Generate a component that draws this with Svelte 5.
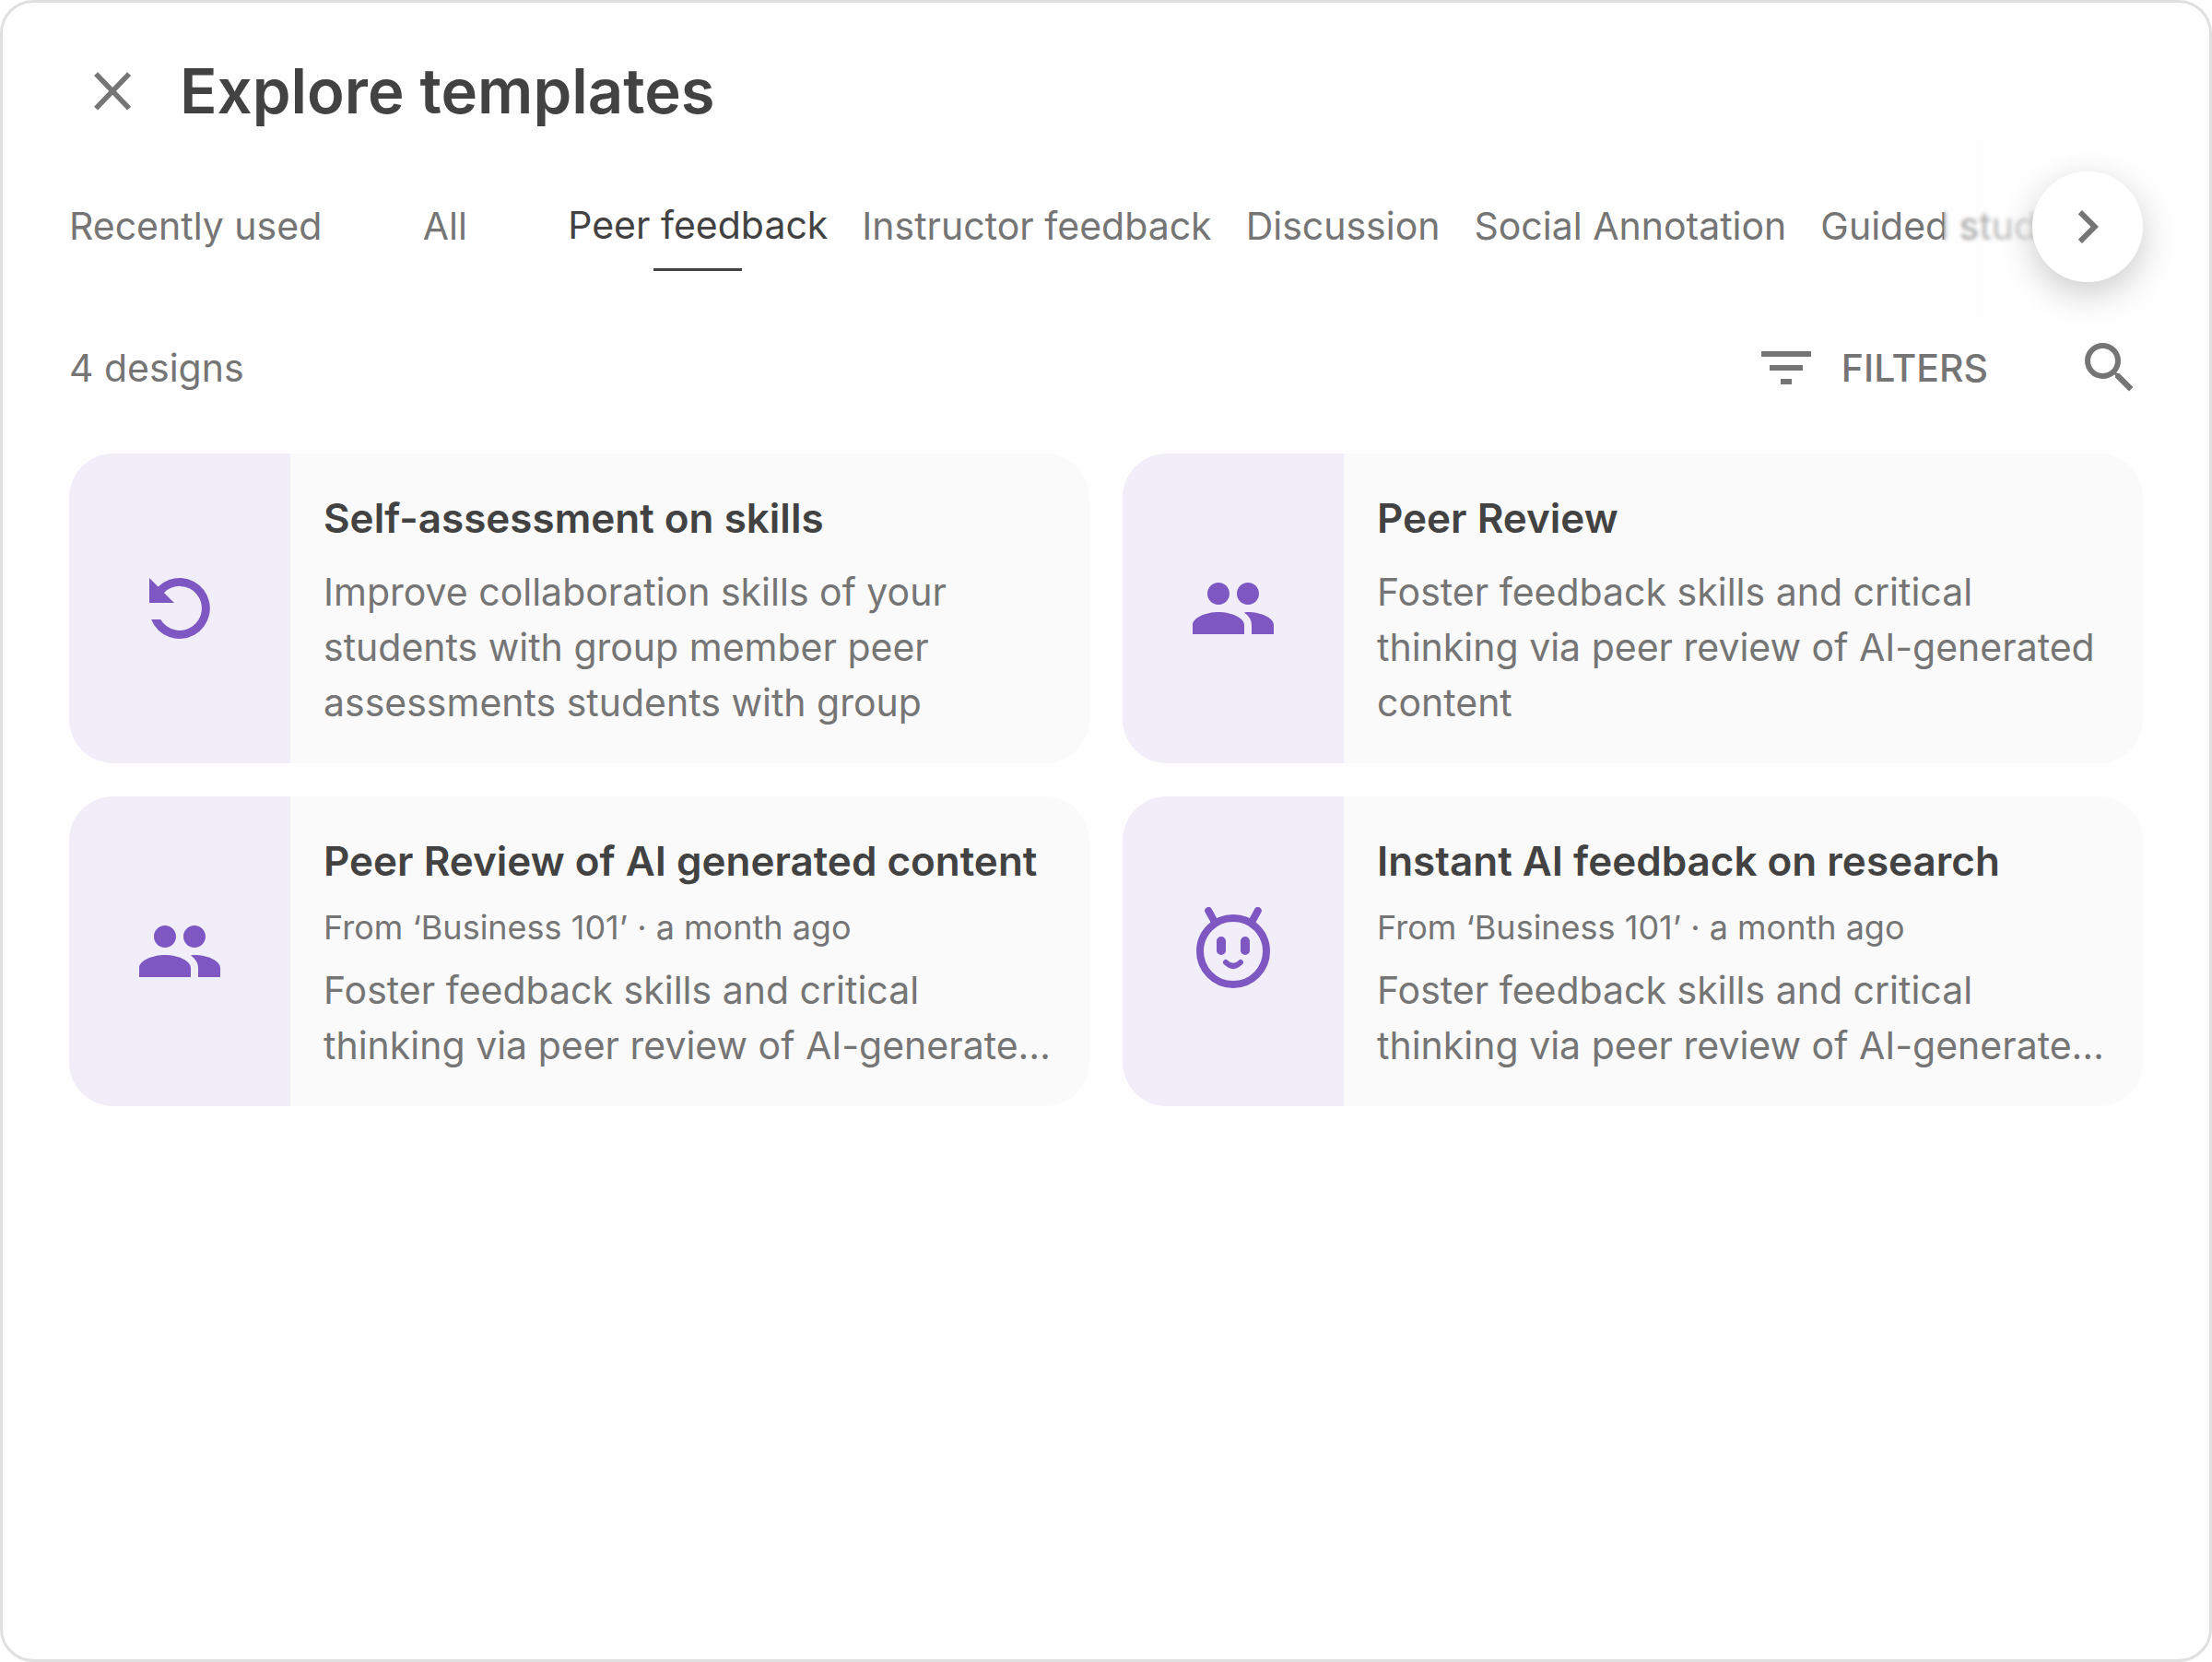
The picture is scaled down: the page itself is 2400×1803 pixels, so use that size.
<script>
  const tabs = ["Recently used", "All", "Peer feedback", "Instructor feedback", "Discussion", "Social Annotation", "Guided study"];
  let activeTab = $state("Peer feedback");

  const designs = [
    {
      icon: "replay",
      title: "Self-assessment on skills",
      text: "Improve collaboration skills of your students with group member peer assessments students with group",
    },
    {
      icon: "people",
      title: "Peer Review",
      text: "Foster feedback skills and critical thinking via peer review of AI-generated content",
    },
    {
      icon: "people",
      title: "Peer Review of AI generated content",
      meta: "From ‘Business 101’ · a month ago",
      text: "Foster feedback skills and critical thinking via peer review of AI-generate…",
    },
    {
      icon: "bot",
      title: "Instant AI feedback on research",
      meta: "From ‘Business 101’ · a month ago",
      text: "Foster feedback skills and critical thinking via peer review of AI-generate…",
    },
  ];
</script>

<main class="dialog">
  <header class="header">
    <button class="icon-button" aria-label="Close">
      <svg class="icon" viewBox="0 0 24 24"><path d="M5.700 5.700l12 12.500M17.700 5.700l-12 12.500" fill="none" stroke="currentColor" stroke-width="1.900" /></svg>
    </button>
    <h1>Explore templates</h1>
  </header>

  <nav class="tab-bar">
    <div class="tabs">
      {#each tabs as tab}
        <button class="tab" class:active={tab === activeTab} onclick={() => (activeTab = tab)}>{tab}</button>
      {/each}
    </div>
    <div class="fade"></div>
    <button class="next" aria-label="More categories">
      <svg class="icon" viewBox="0 0 24 24"><path d="M10 6L8.590 7.410 13.170 12l-4.580 4.590L10 18l6-6z" fill="currentColor" /></svg>
    </button>
  </nav>

  <div class="toolbar">
    <span class="count">{designs.length} designs</span>
    <button class="filters">
      <svg class="icon" viewBox="0 0 24 24"><path d="M10 18h4v-2h-4v2zM3 6v2h18V6H3zm3 7h12v-2H6v2z" fill="currentColor" /></svg>
      FILTERS
    </button>
    <button class="icon-button" aria-label="Search">
      <svg class="icon" viewBox="0 0 24 24"><path d="M15.500 14h-.790l-.280-.270A6.471 6.471 0 0 0 16 9.500 6.500 6.500 0 1 0 9.500 16c1.610 0 3.090-.590 4.230-1.570l.270.280v.790l5 4.990L20.490 19l-4.990-5zm-6 0C7.010 14 5 11.990 5 9.500S7.010 5 9.500 5 14 7.010 14 9.500 11.990 14 9.500 14z" fill="currentColor" /></svg>
    </button>
  </div>

  <section class="grid">
    {#each designs as design}
      <article class="card">
        <div class="thumb">
          <svg viewBox="0 0 24 24">
            {#if design.icon === "replay"}
              <path d="M3.750 3.750v6.750h6.750L7.730 7.730A6 6 0 1 1 6.800 15H4.270A8.250 8.250 0 1 0 6.130 6.130z" fill="currentColor" />
            {:else if design.icon === "people"}
              <path d="M16 11c1.660 0 3-1.340 3-3s-1.340-3-3-3-3 1.340-3 3 1.340 3 3 3zm-8 0c1.660 0 3-1.340 3-3S9.660 5 8 5 5 6.340 5 8s1.340 3 3 3zm0 2c-3.300 0-7 1.500-7 3.500V19h14v-2.500C15 14.500 11.300 13 8 13zm8 0c-.300 0-.700 0-1 .100 1.200.900 2 2 2 3.400V19h6v-2.500c0-2-3.700-3.500-7-3.500z" fill="currentColor" />
            {:else}
              <g fill="none" stroke="currentColor" stroke-linecap="round">
                <circle cx="12" cy="12" r="9" stroke-width="2" />
                <path d="M5.300 1L6.900 3.900M18.700 1l-1.600 2.900" stroke-width="2" />
                <path d="M8.750 9.250v2.500M15.250 9.250v2.500" stroke-width="2.500" />
                <path d="M10 15q2 2 4 0" stroke-width="1.500" />
              </g>
            {/if}
          </svg>
        </div>
        <div class="body">
          <h2>{design.title}</h2>
          {#if design.meta}
            <p class="meta">{design.meta}</p>
          {/if}
          <p class="text">{design.text}</p>
        </div>
      </article>
    {/each}
  </section>
</main>

<style>
  :global(body) {
    background: #fff;
  }

  .dialog {
    box-sizing: border-box;
    min-height: 100vh;
    padding: 48px 72px;
    border: 3px solid #e0e0e0;
    border-radius: 36px;
    background: #fefefe;
    color: #757575;
    font-family: Inter, "Liberation Sans", sans-serif;
    font-size: 41px;
    line-height: 60px;
  }

  button {
    padding: 0;
    border: 0;
    background: none;
    color: inherit;
    font: inherit;
    cursor: pointer;
  }

  h1,
  h2,
  p {
    margin: 0;
  }

  .icon {
    display: block;
    width: 72px;
    height: 72px;
  }

  .header {
    display: flex;
    align-items: center;
    gap: 36px;
    height: 96px;
    padding-left: 12px;
  }

  h1 {
    color: #424242;
    font-size: 67px;
    font-weight: 600;
  }

  .tab-bar {
    position: relative;
    display: flex;
    align-items: center;
    height: 198px;
  }

  .tabs {
    display: flex;
    gap: 37px;
  }

  .tab {
    min-width: 193px;
    height: 96px;
    padding-bottom: 2px;
    white-space: nowrap;
  }

  .tab.active {
    position: relative;
    padding-bottom: 4px;
    color: #424242;
  }

  .tab.active::after {
    content: "";
    position: absolute;
    bottom: 0;
    left: calc(50% - 48px);
    width: 96px;
    height: 3px;
    background: #424242;
  }

  .fade {
    position: absolute;
    top: 0;
    right: 0;
    width: 216px;
    height: 100%;
    background: linear-gradient(90deg, #fefefe33, #fefefe 70%);
    backdrop-filter: blur(2px);
  }

  .next {
    position: absolute;
    right: 0;
    display: grid;
    place-items: center;
    width: 120px;
    height: 120px;
    border-radius: 50%;
    background: #fff;
    box-shadow: 0 12px 36px #0003;
  }

  .toolbar {
    display: flex;
    align-items: center;
    height: 108px;
  }

  .count {
    margin-right: auto;
  }

  .filters {
    display: flex;
    align-items: center;
    gap: 24px;
    margin-right: 96px;
    font-weight: 500;
  }

  .grid {
    display: grid;
    grid-template-columns: 1fr 1fr;
    gap: 36px;
    margin-top: 39px;
  }

  .card {
    display: flex;
    min-height: 336px;
    border-radius: 48px;
    background: #fafafa;
    overflow: hidden;
  }

  .thumb {
    display: grid;
    place-items: center;
    flex: none;
    width: 240px;
    background: #f1edf9;
    color: #7e57c2;
  }

  .thumb svg {
    width: 96px;
    height: 96px;
  }

  .body {
    display: flex;
    flex-direction: column;
    min-width: 0;
    padding: 40px 24px 24px 36px;
  }

  h2 {
    margin-bottom: 12px;
    color: #424242;
    font-size: 44px;
    font-weight: 600;
  }

  .meta {
    font-size: 36px;
  }

  .text {
    margin-top: 8px;
  }
</style>
